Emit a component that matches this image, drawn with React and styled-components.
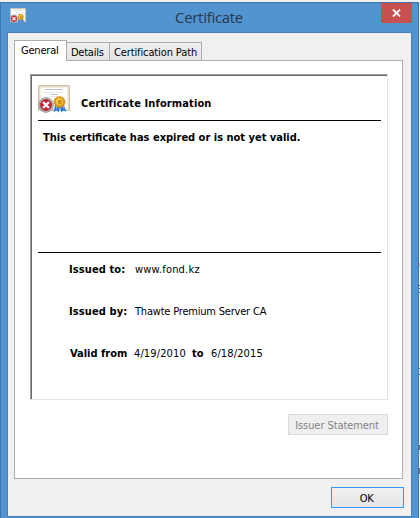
import React from "react";
import styled, { createGlobalStyle } from "styled-components";

const GlobalStyle = createGlobalStyle`
  * { box-sizing: border-box; }
  body { margin: 0; background: #f0f0f0; overflow: hidden; }
`;

const Desktop = styled.div`
  position: relative;
  width: 420px;
  height: 518px;
  padding-top: 2px;
  background: #f0f0f0;
  font: 11px/14px "DejaVu Sans Condensed", "DejaVu Sans", sans-serif;
  font-stretch: condensed;
  color: #000;
`;

const Backdrop = styled.svg`
  position: absolute;
  right: 0;
  top: 0;
`;

const Frame = styled.div`
  width: 419px;
  height: 516px;
  border: 1px solid #3f76aa;
  border-bottom: 0;
  background: #5294d0;
  display: flex;
  flex-direction: column;
`;

const TitleBar = styled.header`
  height: 29px;
  flex: none;
  display: grid;
  grid-template-columns: 29px 1fr 31px;
  padding: 0 6px 0 7px;
`;

const TitleIcon = styled.div`
  padding: 5px 0 0 2px;
`;

const Title = styled.h1`
  margin: 0;
  padding-top: 2px;
  text-align: center;
  font: 400 15px/24px "Open Sans", "Noto Sans", sans-serif;
  letter-spacing: ${(p) => p.$spacing}px;
  color: #26384a;
`;

const CloseButton = styled.button`
  width: 31px;
  height: 20px;
  border: 0;
  padding: 0;
  background: #c75050;
  display: flex;
  align-items: center;
  justify-content: center;
`;

const Client = styled.main`
  width: 405px;
  height: 485px;
  margin-left: 6px;
  border: 1px solid #4580b8;
  background: #f0f0f0;
  padding: 7px 8px 0 6px;
`;

const Tabs = styled.nav`
  display: flex;
  align-items: flex-end;
  height: 20px;
`;

const Tab = styled.button`
  position: relative;
  width: ${(p) => p.$width}px;
  height: ${(p) => (p.$active ? 21 : 18)}px;
  margin-bottom: ${(p) => (p.$active ? -1 : 0)}px;
  border: 1px solid #acacac;
  border-bottom-width: 0;
  border-left-width: ${(p) => (p.$active ? 1 : 0)}px;
  padding: ${(p) => (p.$active ? "3px 0 0 6px" : "3px 0 0 4px")};
  background: ${(p) => (p.$active ? "#fff" : "linear-gradient(#f0f0f0, #e5e5e5)")};
  font: inherit;
  letter-spacing: ${(p) => p.$spacing}px;
  text-align: left;
  white-space: nowrap;
  color: #000;
  display: flex;
`;

const Page = styled.section`
  width: 389px;
  height: 419px;
  border: 1px solid #acacac;
  background: #fff;
  padding: 13px 14px 0 15px;
  display: flex;
  flex-direction: column;
`;

const Sunken = styled.div`
  height: 326px;
  width: 358px;
  border: 1px solid;
  border-color: #a0a0a0 #e3e3e3 #e3e3e3 #a0a0a0;
`;

const Sheet = styled.div`
  height: 324px;
  border: solid #696969;
  border-width: 1px 0 0 1px;
  padding: 9px 6px 0;
`;

const Heading = styled.div`
  height: 36px;
  border-bottom: 1px solid #000;
  display: flex;
  gap: 11px;
`;

const Text = styled.span`
  font-weight: ${(p) => (p.$bold ? 700 : 400)};
  letter-spacing: ${(p) => p.$spacing || 0}px;
  white-space: nowrap;
`;

const HeadingText = styled.div`
  padding-top: 12px;
`;

const Message = styled.div`
  height: 132px;
  border-bottom: 1px solid #000;
  padding: 10px 0 0 5px;
`;

const Row = styled.div`
  display: grid;
  grid-template-columns: ${(p) => p.$columns};
  height: 42px;
  padding-left: ${(p) => p.$indent || 31}px;
`;

const Details = styled.div`
  padding-top: 10px;
`;

const Button = styled.button`
  align-self: flex-end;
  flex: none;
  width: ${(p) => p.$width}px;
  height: 21px;
  margin: ${(p) => p.$margin};
  padding: 2px 2px 0 0;
  border: 1px solid ${(p) => (p.$primary ? "#3399ff" : "#d9d9d9")};
  background: ${(p) => (p.$primary ? "linear-gradient(#f0f0f0, #e5e5e5)" : "#efefef")};
  color: ${(p) => (p.$primary ? "#000" : "#838383")};
  font: inherit;
  line-height: 17px;
  letter-spacing: ${(p) => p.$spacing}px;
`;

const Footer = styled.footer`
  display: flex;
  justify-content: flex-end;
`;

const Glyph = styled.svg`
  display: block;
  flex: none;
`;

function CertificateIcon({ width, height }) {
  return (
    <Glyph width={width} height={height} viewBox="0 0 32 28" preserveAspectRatio="none">
      <rect x=".5" y=".5" width="31" height="25" rx=".5" fill="#e4dcc8" stroke="#c9c1ad" />
      <rect x="2.5" y="2.5" width="27" height="21" fill="#fffefa" stroke="#f3eee0" />
      <path d="M7 4.5h18M12 9.5h8" stroke="#b9c3da" />
      <path d="M5 7.5h22M13 11.5h7" stroke="#e4e8f1" />
      <path d="M17.5 19l-2 8 3.2-1.6 2 2 1.2-6 1.3 6 2-2 3 1.3-2.8-8z" fill="#2879df" />
      <path d="M19 20l-1 5M25 20l1 4" stroke="#67adff" />
      <circle cx="21.5" cy="17" r="5.6" fill="#d89912" stroke="#c4850a" strokeWidth=".7" strokeDasharray="1.5 1" />
      <circle cx="21.3" cy="16.5" r="3.6" fill="#f3c84d" />
      <circle cx="21.8" cy="17" r="2.2" fill="#ce910f" />
      <circle cx="8" cy="20" r="7.3" fill="#c9c9c9" stroke="#808080" strokeWidth=".8" />
      <circle cx="8" cy="20" r="5.7" fill="#c91f2d" stroke="#92212a" strokeWidth=".5" />
      <path d="M5 17l6 6M11 17l-6 6" stroke="#fff" strokeWidth="2.4" />
    </Glyph>
  );
}

export default function App() {
  return (
    <Desktop>
      <GlobalStyle />
      <Backdrop width="1" height="518" viewBox="0 0 1 518" shapeRendering="crispEdges">
        <path fill="#dfc49d" d="M0 263h1v4H0z" />
        <path fill="#596b8a" d="M0 285h1v1H0zm0 3h1v1H0zm0 4h1v1H0zm0 76h1v1H0zm0 6h1v1H0z" />
        <path fill="#806b68" d="M0 445h1v5H0zm0 23h1v6H0z" />
      </Backdrop>
      <Frame>
        <TitleBar>
          <TitleIcon><CertificateIcon width={16} height={15} /></TitleIcon>
          <Title $spacing={-0.3}>Certificate</Title>
          <CloseButton aria-label="Close">
            <Glyph width="9" height="8" viewBox="0 0 9 8">
              <path d="M1 .5l7 7M8 .5l-7 7" stroke="#fff" strokeWidth="1.8" />
            </Glyph>
          </CloseButton>
        </TitleBar>
        <Client>
          <Tabs>
            <Tab $active $width={53} $spacing={-0.2}>General</Tab>
            <Tab $width={43} $spacing={-0.25}>Details</Tab>
            <Tab $width={92} $spacing={-0.12}>Certification Path</Tab>
          </Tabs>
          <Page>
            <Sunken>
              <Sheet>
                <Heading>
                  <CertificateIcon width={32} height={28} />
                  <HeadingText><Text $bold $spacing={0.12}>Certificate Information</Text></HeadingText>
                </Heading>
                <Message><Text $bold>This certificate has expired or is not yet valid.</Text></Message>
                <Details>
                  <Row $columns="66px 1fr">
                    <Text $bold $spacing={0.1}>Issued to:</Text>
                    <Text $spacing={0.2}>www.fond.kz</Text>
                  </Row>
                  <Row $columns="66px 1fr">
                    <Text $bold $spacing={0.1}>Issued by:</Text>
                    <Text $spacing={-0.2}>Thawte Premium Server CA</Text>
                  </Row>
                  <Row $indent={32} $columns="64px 58px 19px 1fr">
                    <Text $bold>Valid from</Text>
                    <Text $spacing={0.12}>4/19/2010</Text>
                    <Text $bold>to</Text>
                    <Text $spacing={0.12}>6/18/2015</Text>
                  </Row>
                </Details>
              </Sheet>
            </Sunken>
            <Button disabled $width={100} $margin="14px 0 0" $spacing={-0.08}>Issuer Statement</Button>
          </Page>
          <Footer>
            <Button $primary $width={73} $margin="8px -1px 0 0" $spacing={-0.3}>OK</Button>
          </Footer>
        </Client>
      </Frame>
    </Desktop>
  );
}
